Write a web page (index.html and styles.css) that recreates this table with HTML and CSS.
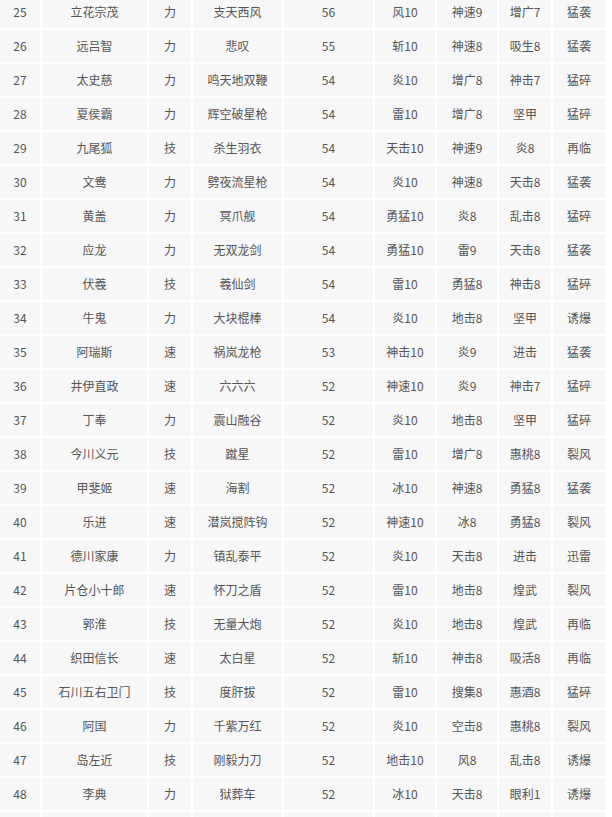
FILE: index.html
```html
<!DOCTYPE html>
<html lang="zh-CN">
<head>
<meta charset="utf-8">
<title>武器表</title>
<link rel="stylesheet" href="styles.css">
</head>
<body>
<table class="grid">
<colgroup>
<col class="c-no"><col class="c-name"><col class="c-type"><col class="c-weapon"><col class="c-val"><col class="c-s1"><col class="c-s2"><col class="c-s3"><col class="c-s4">
</colgroup>
<tbody>
<tr><td>25</td><td>立花宗茂</td><td>力</td><td>支天西风</td><td>56</td><td>风10</td><td>神速9</td><td>增广7</td><td>猛袭</td></tr>
<tr><td>26</td><td>远吕智</td><td>力</td><td>悲叹</td><td>55</td><td>斩10</td><td>神速8</td><td>吸生8</td><td>猛袭</td></tr>
<tr><td>27</td><td>太史慈</td><td>力</td><td>鸣天地双鞭</td><td>54</td><td>炎10</td><td>增广8</td><td>神击7</td><td>猛碎</td></tr>
<tr><td>28</td><td>夏侯霸</td><td>力</td><td>辉空破星枪</td><td>54</td><td>雷10</td><td>增广8</td><td>坚甲</td><td>猛碎</td></tr>
<tr><td>29</td><td>九尾狐</td><td>技</td><td>杀生羽衣</td><td>54</td><td>天击10</td><td>神速9</td><td>炎8</td><td>再临</td></tr>
<tr><td>30</td><td>文鸯</td><td>力</td><td>劈夜流星枪</td><td>54</td><td>炎10</td><td>神速8</td><td>天击8</td><td>猛袭</td></tr>
<tr><td>31</td><td>黄盖</td><td>力</td><td>冥爪舰</td><td>54</td><td>勇猛10</td><td>炎8</td><td>乱击8</td><td>猛碎</td></tr>
<tr><td>32</td><td>应龙</td><td>力</td><td>无双龙剑</td><td>54</td><td>勇猛10</td><td>雷9</td><td>天击8</td><td>猛袭</td></tr>
<tr><td>33</td><td>伏羲</td><td>技</td><td>羲仙剑</td><td>54</td><td>雷10</td><td>勇猛8</td><td>神击8</td><td>猛碎</td></tr>
<tr><td>34</td><td>牛鬼</td><td>力</td><td>大块棍棒</td><td>54</td><td>炎10</td><td>地击8</td><td>坚甲</td><td>诱爆</td></tr>
<tr><td>35</td><td>阿瑞斯</td><td>速</td><td>祸岚龙枪</td><td>53</td><td>神击10</td><td>炎9</td><td>进击</td><td>猛袭</td></tr>
<tr><td>36</td><td>井伊直政</td><td>速</td><td>六六六</td><td>52</td><td>神速10</td><td>炎9</td><td>神击7</td><td>猛碎</td></tr>
<tr><td>37</td><td>丁奉</td><td>力</td><td>震山融谷</td><td>52</td><td>炎10</td><td>地击8</td><td>坚甲</td><td>猛碎</td></tr>
<tr><td>38</td><td>今川义元</td><td>技</td><td>蹴星</td><td>52</td><td>雷10</td><td>增广8</td><td>惠桃8</td><td>裂风</td></tr>
<tr><td>39</td><td>甲斐姬</td><td>速</td><td>海割</td><td>52</td><td>冰10</td><td>神速8</td><td>勇猛8</td><td>猛袭</td></tr>
<tr><td>40</td><td>乐进</td><td>速</td><td>潜岚搅阵钩</td><td>52</td><td>神速10</td><td>冰8</td><td>勇猛8</td><td>裂风</td></tr>
<tr><td>41</td><td>德川家康</td><td>力</td><td>镇乱泰平</td><td>52</td><td>炎10</td><td>天击8</td><td>进击</td><td>迅雷</td></tr>
<tr><td>42</td><td>片仓小十郎</td><td>速</td><td>怀刀之盾</td><td>52</td><td>雷10</td><td>地击8</td><td>煌武</td><td>裂风</td></tr>
<tr><td>43</td><td>郭淮</td><td>技</td><td>无量大炮</td><td>52</td><td>炎10</td><td>地击8</td><td>煌武</td><td>再临</td></tr>
<tr><td>44</td><td>织田信长</td><td>速</td><td>太白星</td><td>52</td><td>斩10</td><td>神击8</td><td>吸活8</td><td>再临</td></tr>
<tr><td>45</td><td>石川五右卫门</td><td>技</td><td>度肝拔</td><td>52</td><td>雷10</td><td>搜集8</td><td>惠酒8</td><td>猛碎</td></tr>
<tr><td>46</td><td>阿国</td><td>力</td><td>千紫万红</td><td>52</td><td>炎10</td><td>空击8</td><td>惠桃8</td><td>裂风</td></tr>
<tr><td>47</td><td>岛左近</td><td>技</td><td>刚毅力刀</td><td>52</td><td>地击10</td><td>风8</td><td>乱击8</td><td>诱爆</td></tr>
<tr><td>48</td><td>李典</td><td>力</td><td>狱葬车</td><td>52</td><td>冰10</td><td>天击8</td><td>眼利1</td><td>诱爆</td></tr>
<tr><td></td><td></td><td></td><td></td><td></td><td></td><td></td><td></td><td></td></tr>
</tbody>
</table>
</body>
</html>
```

FILE: styles.css
```css
html, body {
  margin: 0;
  padding: 0;
  background: #ffffff;
  overflow: hidden;
}

.grid {
  border-collapse: separate;
  border-spacing: 2px;
  table-layout: fixed;
  width: 609px;
  margin: -6px 0 0 -2px;
  font-family: "Microsoft YaHei", "Noto Sans CJK SC", "Noto Sans", sans-serif;
  font-size: 12px;
  color: #555555;
}

.grid td {
  height: 32px;
  padding: 0;
  background: #f7f7f7;
  text-align: center;
  vertical-align: middle;
  white-space: nowrap;
  line-height: 16px;
}

.c-no { width: 40px; }
.c-name { width: 105px; }
.c-type { width: 42px; }
.c-weapon { width: 89px; }
.c-val { width: 89px; }
.c-s1 { width: 60px; }
.c-s2 { width: 60px; }
.c-s3 { width: 52px; }
.c-s4 { width: 52px; }
```
